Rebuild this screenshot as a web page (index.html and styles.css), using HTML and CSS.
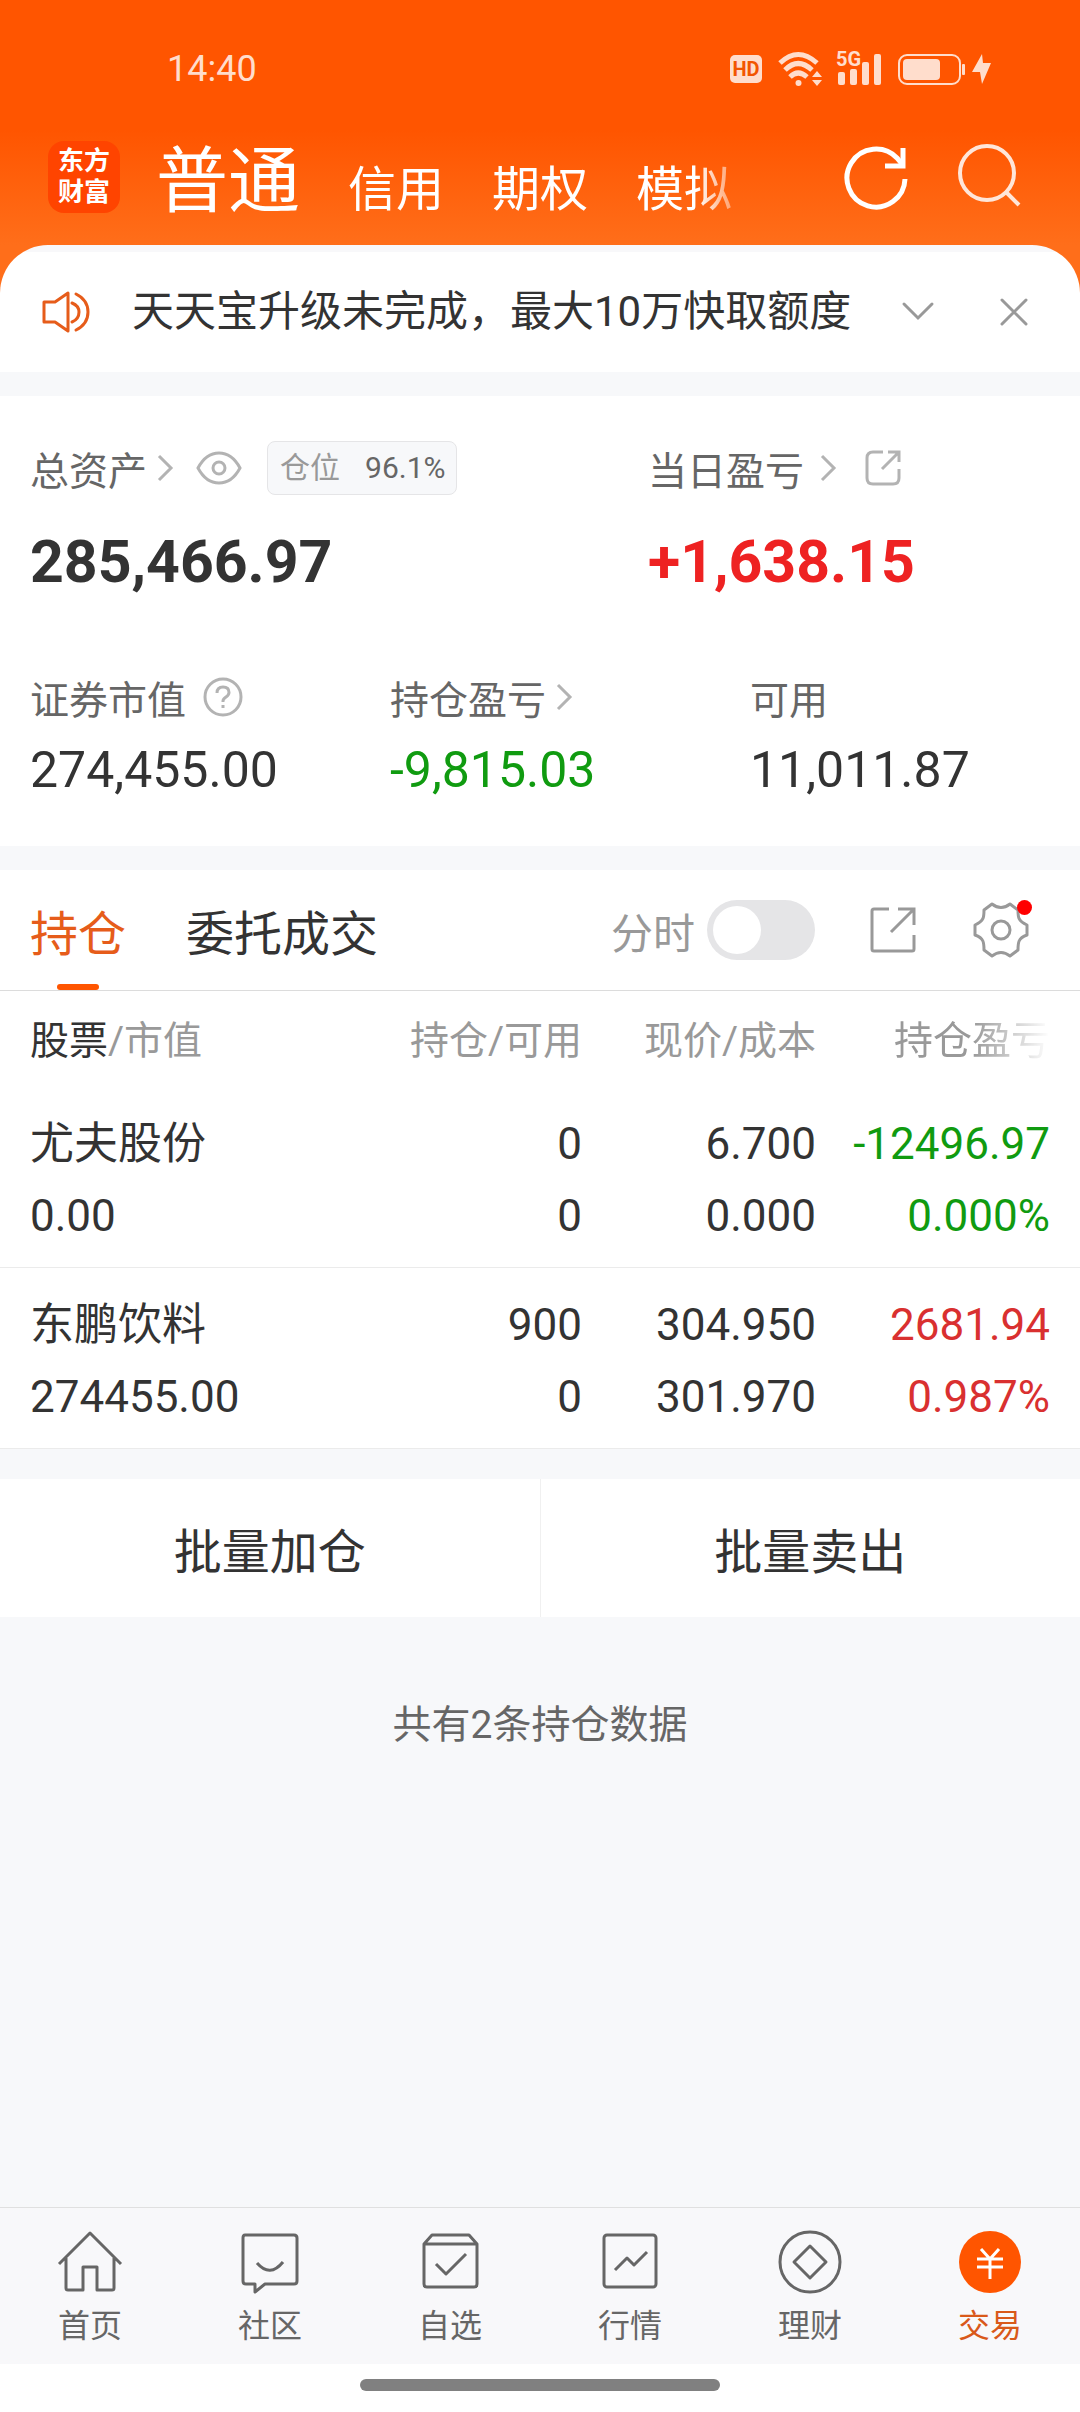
FILE: index.html
```html
<!DOCTYPE html>
<html lang="zh-CN">
<head>
    <meta charset="UTF-8">
    <meta name="viewport" content="width=device-width, initial-scale=1.0">
    <title>交易 - 持仓</title>
    <link rel="stylesheet" href="styles.css">
</head>
<body>

    <header class="header">
        <!-- Статусная строка -->
        <div class="status">
            <span class="status-time">14:40</span>
            <div class="status-icons">
                <span class="hd">HD</span>
                <svg class="wifi" width="46" height="36" viewBox="0 0 46 36" fill="none" stroke="currentColor" stroke-width="5">
                    <path d="M2 12 Q20 -5 39 12M7 19 Q20 6 34 19M12 26 Q20 18 29 26"/>
                    <circle cx="20.500" cy="32" r="3" fill="currentColor" stroke="none"/>
                    <path d="M34 26l5-6 5 6zM34 29l5 6 5-6z" fill="currentColor" stroke="none"/>
                </svg>
                <div class="signal">
                    <span class="signal-type">5G</span>
                    <svg width="46" height="34" viewBox="0 0 46 34" fill="currentColor">
                        <rect x="2" y="20" width="7" height="13" rx="2"/>
                        <rect x="14" y="17" width="7" height="16" rx="2"/>
                        <rect x="26" y="10" width="7" height="23" rx="2"/>
                        <rect x="38" y="2" width="7" height="31" rx="2"/>
                    </svg>
                </div>
                <svg class="battery" width="96" height="34" viewBox="0 0 96 34" fill="currentColor">
                    <rect x="1" y="3" width="61" height="29" rx="8" fill="none" stroke="currentColor" stroke-width="2"/>
                    <rect x="5" y="7" width="37" height="21" rx="4"/>
                    <rect x="64" y="12" width="3" height="11" rx="1"/>
                    <path d="M84 2L74 20h8l2 12 9-21h-8z"/>
                </svg>
            </div>
        </div>

        <div class="topbar">
            <a class="logo" href="#">东方<br>财富</a>
            <nav class="accounts">
                <a class="account active" href="#">普通</a>
                <a class="account" href="#">信用</a>
                <a class="account" href="#">期权</a>
                <a class="account" href="#">模拟</a>
            </nav>
            <button class="icon-btn refresh" aria-label="刷新">
                <svg width="66" height="66" viewBox="0 0 66 66" fill="none" stroke="currentColor" stroke-width="5">
                    <path d="M61 35A29 29 0 1 1 53 14L58 20"/>
                    <path d="M59 4V22H41"/>
                </svg>
            </button>
            <button class="icon-btn search" aria-label="搜索">
                <svg width="66" height="66" viewBox="0 0 66 66" fill="none" stroke="currentColor" stroke-width="4">
                    <circle cx="29" cy="29" r="27"/>
                    <path d="M48 48L61 61"/>
                </svg>
            </button>
        </div>
    </header>

    <main class="main">
        <div class="notice">
            <svg width="48" height="44" viewBox="0 0 48 44" fill="none" stroke="currentColor" stroke-width="3">
                <path d="M2 12H13L26 3V41L13 32H2Z" stroke-linejoin="round"/>
                <path d="M30 13C35 15 37 18 37 22S35 30 30 32M34 4C42 8 46 14 46 22S42 36 34 40" stroke-linecap="round"/>
            </svg>
            <p class="notice-text">天天宝升级未完成，最大10万快取额度</p>
            <button class="icon-btn" aria-label="展开">
                <svg width="36" height="36" viewBox="0 0 36 36" fill="none" stroke="currentColor" stroke-width="3" stroke-linecap="round">
                    <path d="M4 10L18 24 32 10"/>
                </svg>
            </button>
            <button class="icon-btn notice-close" aria-label="关闭">
                <svg width="36" height="36" viewBox="0 0 36 36" fill="none" stroke="currentColor" stroke-width="3" stroke-linecap="round">
                    <path d="M6 6L30 30M30 6L6 30"/>
                </svg>
            </button>
        </div>

        <!-- Активы -->
        <section class="assets">
            <div class="assets-top">
                <div class="asset">
                    <div class="label">
                        <a href="#">总资产</a>
                        <svg class="arrow" width="18" height="30" viewBox="0 0 18 30"><path d="M3 3L15 15 3 27"/></svg>
                        <svg class="eye" width="46" height="34" viewBox="0 0 46 34">
                            <path d="M2 17Q10 2 23 2T44 17Q36 32 23 32T2 17Z"/>
                            <circle cx="23" cy="17" r="6"/>
                        </svg>
                        <span class="badge">仓位 <b>96.1%</b></span>
                    </div>
                    <div class="total">285,466.97</div>
                </div>
                <div class="asset">
                    <div class="label">
                        <a href="#">当日盈亏</a>
                        <svg class="arrow wide" width="18" height="30" viewBox="0 0 18 30"><path d="M3 3L15 15 3 27"/></svg>
                        <svg class="share" width="36" height="36" viewBox="0 0 36 36">
                            <path d="M18 2H8Q2 2 2 8V28Q2 34 8 34H28Q34 34 34 28V19M23 2H34V12M34 2L17 19"/>
                        </svg>
                    </div>
                    <div class="total red">+1,638.15</div>
                </div>
            </div>
            <div class="assets-bottom">
                <div class="asset">
                    <div class="label">
                        证券市值
                        <svg class="help" width="40" height="40" viewBox="0 0 40 40">
                            <circle cx="20" cy="20" r="18"/>
                            <path d="M14 16Q14 10 20 10T26 15.500Q26 18 23 20T20 24V25M20 28V31"/>
                        </svg>
                    </div>
                    <div class="value">274,455.00</div>
                </div>
                <div class="asset">
                    <div class="label">
                        <a href="#">持仓盈亏</a>
                        <svg class="arrow" width="18" height="30" viewBox="0 0 18 30"><path d="M3 3L15 15 3 27"/></svg>
                    </div>
                    <div class="value green">-9,815.03</div>
                </div>
                <div class="asset">
                    <div class="label">可用</div>
                    <div class="value">11,011.87</div>
                </div>
            </div>
        </section>

        <!-- Позиции -->
        <section class="positions">
            <div class="tabs">
                <button class="tab active">持仓</button>
                <button class="tab">委托成交</button>
                <label class="switch-label" for="minute">分时</label>
                <input class="switch" type="checkbox" id="minute">
                <button class="icon-btn export" aria-label="分享">
                    <svg width="50" height="50" viewBox="0 0 50 50" fill="none" stroke="currentColor" stroke-width="3">
                        <path d="M21 4H6Q4 4 4 6V44Q4 46 6 46H44Q46 46 46 44V30M30 4H46V20M46 4L23 27"/>
                    </svg>
                </button>
                <button class="icon-btn settings" aria-label="设置">
                    <svg width="58" height="58" viewBox="0 0 58 58" fill="none" stroke="currentColor" stroke-width="3" stroke-linejoin="round">
                        <path d="M20 3Q29 10 38 3L46 9C46 16 46 20 55 24V34C46 37 46 42 46 49L38 55Q29 48 20 55L12 49C12 42 12 37 3 34V24C12 20 12 16 12 9Z"/>
                        <circle cx="29" cy="29" r="9"/>
                    </svg>
                    <span class="dot"></span>
                </button>
            </div>

            <table class="table">
                <thead>
                    <tr>
                        <th><b>股票</b>/市值</th>
                        <th>持仓/可用</th>
                        <th>现价/成本</th>
                        <th><span class="fade">持仓盈亏</span></th>
                    </tr>
                </thead>
                <tbody>
                    <tr>
                        <td>尤夫股份<br>0.00</td>
                        <td>0<br>0</td>
                        <td>6.700<br>0.000</td>
                        <td class="green">-12496.97<br>0.000%</td>
                    </tr>
                    <tr>
                        <td>东鹏饮料<br>274455.00</td>
                        <td>900<br>0</td>
                        <td>304.950<br>301.970</td>
                        <td class="down">2681.94<br>0.987%</td>
                    </tr>
                </tbody>
            </table>
        </section>

        <div class="batch">
            <button class="batch-btn">批量加仓</button>
            <button class="batch-btn">批量卖出</button>
        </div>

        <p class="count">共有2条持仓数据</p>
    </main>

    <footer class="footer">
        <nav class="nav">
            <a class="nav-item" href="#">
                <svg width="66" height="66" viewBox="0 0 66 66">
                    <path d="M2 34L33 3 64 34M9 28V58Q9 60 11 60H26V37H40V60H55Q57 60 57 58V28"/>
                </svg>
                首页
            </a>
            <a class="nav-item" href="#">
                <svg width="66" height="66" viewBox="0 0 66 66">
                    <path d="M8 5H57Q60 5 60 8V51Q60 54 57 54H28L18 62V54H9Q6 54 6 51V8Q6 5 8 5Z"/>
                    <path d="M20 33Q33 48 46 32"/>
                </svg>
                社区
            </a>
            <a class="nav-item" href="#">
                <svg width="66" height="66" viewBox="0 0 66 66">
                    <path d="M7 14L15 5H52L60 14V54Q60 57 57 57H10Q7 57 7 54ZM7 14H60"/>
                    <path d="M19 34L29 44 49 24"/>
                </svg>
                自选
            </a>
            <a class="nav-item" href="#">
                <svg width="66" height="66" viewBox="0 0 66 66">
                    <rect x="7" y="5" width="52" height="52" rx="3"/>
                    <path d="M18 40L30 28 37 35 50 22"/>
                </svg>
                行情
            </a>
            <a class="nav-item" href="#">
                <svg width="66" height="66" viewBox="0 0 66 66">
                    <circle cx="33" cy="32" r="30"/>
                    <path d="M33 16L49 32 33 48 17 32Z"/>
                </svg>
                理财
            </a>
            <a class="nav-item active" href="#">
                <svg width="66" height="66" viewBox="0 0 66 66">
                    <circle cx="33" cy="32" r="31" fill="#ff5500" stroke="none"/>
                    <path d="M24 19L33 29 42 19M33 29V49M20 29H46M20 37H46" stroke="#fff"/>
                </svg>
                交易
            </a>
        </nav>
        <div class="home-bar"></div>
    </footer>

</body>
</html>
```
FILE: styles.css
```css
* {
    box-sizing: border-box;
}

body {
    font-family: Roboto, 'Noto Sans CJK SC', sans-serif;
    background: #f7f8fa;
    color: #333;
    display: flex;
    flex-direction: column;
    min-height: 100vh;
    margin: 0;
}

a {
    color: inherit;
    text-decoration: none;
}

button {
    font-family: inherit;
    color: inherit;
    background: none;
    border: none;
    padding: 0;
    cursor: pointer;
}

p {
    margin: 0;
}

svg {
    display: block;
    flex-shrink: 0;
}

.icon-btn {
    display: block;
    position: relative;
}

.red {
    color: #ee2222;
}

.down {
    color: #d93030;
}

.green {
    color: #109b10;
}

/* Шапка */
.header {
    background: linear-gradient(#ff5500 130px, #ff6e1a 245px);
    color: white;
    padding-bottom: 48px;
}

.status {
    display: flex;
    justify-content: space-between;
    align-items: center;
    height: 132px;
    padding: 6px 86px 0 167px;
    color: #ffddcc;
}

.status-time {
    font-size: 36px;
}

.status-icons {
    display: flex;
    align-items: center;
}

.hd {
    width: 32px;
    border-radius: 5px;
    background: #ffddcc;
    color: #f25500;
    font-size: 20px;
    font-weight: bold;
    line-height: 28px;
    text-align: center;
}

.wifi {
    margin-left: 16px;
}

.signal {
    position: relative;
    margin: 0 16px 0 12px;
}

.signal-type {
    position: absolute;
    left: 0;
    top: -3px;
    font-size: 20px;
    font-weight: bold;
    line-height: 20px;
}

.topbar {
    display: flex;
    align-items: center;
    height: 90px;
    margin-bottom: 23px;
    padding: 0 56px 0 48px;
}

.logo {
    width: 72px;
    padding: 5px 0;
    border-radius: 16px;
    background: #ff4400;
    font-size: 26px;
    font-weight: bold;
    line-height: 31px;
    text-align: center;
}

.accounts {
    display: flex;
    align-items: baseline;
    gap: 48px;
    flex: 1;
    margin-left: 36px;
    padding-top: 18px;
    overflow: hidden;
    -webkit-mask-image: linear-gradient(90deg, #000 540px, transparent 600px);
    mask-image: linear-gradient(90deg, #000 540px, transparent 600px);
}

.account {
    font-size: 48px;
    line-height: 90px;
    white-space: nowrap;
}

.account.active {
    font-size: 72px;
}

.search {
    margin-left: 48px;
    color: #ffe6d9;
}

/* Уведомление */
.main {
    flex: 1;
    margin-top: -48px;
}

.notice {
    display: flex;
    align-items: center;
    height: 127px;
    padding: 7px 48px 0 42px;
    border-radius: 48px 48px 0 0;
    background: linear-gradient(#f8f8fa 7px, white 7px);
    color: #999;
}

.notice > svg {
    color: #e65c1a;
}

.notice-text {
    flex: 1;
    margin-left: 42px;
    font-size: 42px;
    line-height: 60px;
    color: #333;
}

.notice-close {
    margin-left: 60px;
}

/* Активы */
.assets {
    margin-top: 24px;
    padding: 42px 30px 46px;
    background: white;
}

.assets svg {
    fill: none;
    stroke: #b3b3b3;
    stroke-width: 3;
}

.assets-top {
    display: grid;
    grid-template-columns: 618px 1fr;
    margin-bottom: 70px;
}

.assets-bottom {
    display: grid;
    grid-template-columns: 360px 360px 1fr;
}

.label {
    display: flex;
    align-items: center;
    height: 60px;
    font-size: 39px;
    color: #666;
}

.arrow {
    margin-left: 9px;
}

.arrow.wide {
    margin-left: 15px;
}

.eye {
    margin-left: 22px;
}

.share {
    margin-left: 28px;
}

.help {
    margin-left: 17px;
}

.badge {
    display: flex;
    gap: 25px;
    margin-left: 25px;
    padding: 0 11px 0 12px;
    border: 1px solid #e5e5e7;
    border-radius: 8px;
    background: #f7f8fa;
    font-size: 30px;
    line-height: 52px;
    color: #999;
}

.badge b {
    font-weight: normal;
    color: #666;
}

.total {
    font-size: 59px;
    font-weight: bold;
    line-height: 70px;
    margin-top: 29px;
}

.value {
    font-size: 50px;
    line-height: 60px;
    margin-top: 13px;
}

/* Позиции */
.positions {
    margin-top: 24px;
    background: white;
}

.tabs {
    display: flex;
    align-items: center;
    height: 121px;
    padding: 0 50px 0 30px;
    border-bottom: 1px solid #dcdcdc;
}

.tab {
    position: relative;
    height: 120px;
    margin-right: 60px;
    font-size: 48px;
}

.tab.active {
    color: #e65c1a;
}

.tab.active::after {
    content: "";
    position: absolute;
    left: 50%;
    bottom: 0;
    width: 42px;
    height: 6px;
    margin-left: -21px;
    border-radius: 3px;
    background: #ff5500;
}

.switch-label {
    margin-left: auto;
    font-size: 42px;
    color: #999;
}

.switch {
    appearance: none;
    position: relative;
    width: 108px;
    height: 60px;
    margin: 0 53px 0 12px;
    border-radius: 30px;
    background: #e5e5e7;
}

.switch::after {
    content: "";
    position: absolute;
    left: 6px;
    top: 6px;
    width: 48px;
    height: 48px;
    border-radius: 50%;
    background: white;
}

.export,
.settings {
    color: #999;
}

.settings {
    margin-left: 54px;
}

.dot {
    position: absolute;
    right: -2px;
    top: -1px;
    width: 15px;
    height: 15px;
    border-radius: 50%;
    background: #ff0000;
}

.table {
    width: 100%;
    table-layout: fixed;
    border-collapse: collapse;
    text-align: right;
}

.table th {
    width: 234px;
    padding: 4px 0 0;
    font-size: 39px;
    font-weight: normal;
    line-height: 92px;
    color: #999;
}

.table td {
    padding: 21px 0 15px;
    font-size: 44px;
    line-height: 72px;
    white-space: nowrap;
}

.table th:first-child,
.table td:first-child {
    width: auto;
    padding-left: 30px;
    text-align: left;
}

.table th:last-child,
.table td:last-child {
    width: 264px;
    padding-right: 30px;
}

.table th b {
    font-weight: normal;
    color: #333;
}

.table tbody tr {
    border-bottom: 1px solid #ebebeb;
}

.fade {
    -webkit-mask-image: linear-gradient(90deg, #000 50%, transparent);
    mask-image: linear-gradient(90deg, #000 50%, transparent);
}

.batch {
    display: flex;
    margin-top: 30px;
    background: white;
}

.batch-btn {
    flex: 1;
    height: 138px;
    font-size: 48px;
}

.batch-btn:first-child {
    border-right: 1px solid #f0f0f0;
}

.count {
    margin-top: 78px;
    font-size: 39px;
    line-height: 60px;
    text-align: center;
    color: #666;
}

/* Нижнее меню */
.footer {
    background: white;
}

.nav {
    display: flex;
    height: 157px;
    border-top: 1px solid #e0e0e0;
    background: #f8f8fa;
}

.nav-item {
    display: flex;
    flex: 1;
    flex-direction: column;
    align-items: center;
    padding-top: 22px;
    font-size: 32px;
    line-height: 60px;
    color: #666;
}

.nav-item svg {
    fill: none;
    stroke: currentColor;
    stroke-width: 3;
    stroke-linejoin: round;
}

.nav-item.active {
    color: #d9591a;
}

.home-bar {
    width: 360px;
    height: 12px;
    margin: 15px auto 21px;
    border-radius: 6px;
    background: #808080;
}
```
